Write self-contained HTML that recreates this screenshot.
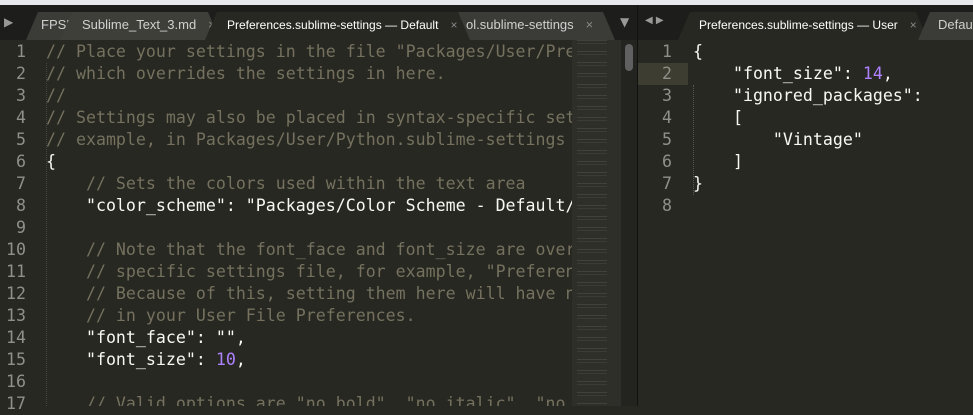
<!DOCTYPE html>
<html><head><meta charset="utf-8"><style>
*{margin:0;padding:0;box-sizing:border-box}
body{width:973px;height:406px;overflow:hidden;background:#272822;position:relative;font-family:"DejaVu Sans Mono","Liberation Mono",monospace}
.top{position:absolute;left:0;top:0;width:973px;height:5px;background:#e6e8ee}
.bar{position:absolute;left:0;top:5px;width:973px;height:35px;background:#1d1d1b}
.tab{position:absolute;top:12px;height:28px;background:#3b3b37;clip-path:polygon(0 100%,12px 0,calc(100% - 12px) 0,100% 100%);font-family:"Liberation Sans",sans-serif;font-size:13px;color:#d0d0d0;line-height:26px;white-space:nowrap;overflow:hidden}
.tab.act{background:#272822;color:#fff}
.x{color:#888;margin-left:12px}
.line{position:absolute;height:22px;line-height:22px;font-size:16.6px;white-space:pre}
.n{color:#8f908a;text-align:right}
.c{color:#75715e}.s{color:#f8f8f2}.p{color:#ae81ff}
.arrow{position:absolute;color:#999;font-size:12px;font-family:"DejaVu Sans",sans-serif}
</style></head><body>
<div class="top"></div>
<div class="bar"></div>
<div class="arrow" style="left:4px;top:15px">▶</div>
<div class="tab" style="left:26px;width:70px;padding-left:15px">FPSD</div>
<div class="tab" style="left:60px;width:160px;padding-left:22px;background:#3f3f3a">Sublime_Text_3.md<span class="x">×</span></div>
<div class="tab" style="left:440px;width:175px;padding-left:26px">ol.sublime-settings<span class="x">×</span></div>
<div class="tab act" style="left:205px;width:265px;padding-left:22px;font-size:12px">Preferences.sublime-settings — Default<span class="x">×</span></div>
<div class="arrow" style="left:620px;top:15px">▼</div>
<div style="position:absolute;left:637px;top:5px;width:1px;height:401px;background:#111"></div>
<div class="arrow" style="left:645px;top:15px;font-size:10px">◀ ▶</div>
<div class="tab act" style="left:678px;width:250px;padding-left:21px;font-size:12px">Preferences.sublime-settings — User<span class="x">×</span></div>
<div class="tab" style="left:918px;width:80px;padding-left:20px">Default</div>

<div style="position:absolute;left:46px;top:63px;width:0;height:343px;border-left:1px dotted #444"></div>
<div style="position:absolute;left:572px;top:40px;width:49px;height:366px;background:#2f2f2a;background-image:repeating-linear-gradient(180deg,rgba(180,180,170,.14) 0 1px,transparent 1px 3px,rgba(180,180,170,.1) 3px 4px,transparent 4px 11px);background-size:30px 11px;background-repeat:repeat-y;background-position:5px 0"></div>
<div style="position:absolute;left:621px;top:40px;width:16px;height:366px;background:#232320"></div>
<div style="position:absolute;left:625px;top:44px;width:8px;height:27px;border-radius:4px;background:#606060"></div>

<div style="position:absolute;left:638px;top:63px;width:50px;height:22px;background:#3e3d32"></div>
<div style="position:absolute;left:693px;top:85px;width:0;height:110px;border-left:1px dotted #555"></div>

<div class="line n" style="left:0;top:41px;width:26px">1</div>
<div class="line n" style="left:0;top:63px;width:26px">2</div>
<div class="line n" style="left:0;top:85px;width:26px">3</div>
<div class="line n" style="left:0;top:107px;width:26px">4</div>
<div class="line n" style="left:0;top:129px;width:26px">5</div>
<div class="line n" style="left:0;top:151px;width:26px">6</div>
<div class="line n" style="left:0;top:173px;width:26px">7</div>
<div class="line n" style="left:0;top:195px;width:26px">8</div>
<div class="line n" style="left:0;top:217px;width:26px">9</div>
<div class="line n" style="left:0;top:239px;width:26px">10</div>
<div class="line n" style="left:0;top:261px;width:26px">11</div>
<div class="line n" style="left:0;top:283px;width:26px">12</div>
<div class="line n" style="left:0;top:305px;width:26px">13</div>
<div class="line n" style="left:0;top:327px;width:26px">14</div>
<div class="line n" style="left:0;top:349px;width:26px">15</div>
<div class="line n" style="left:0;top:371px;width:26px">16</div>
<div class="line n" style="left:0;top:393px;width:26px">17</div>

<div style="position:absolute;left:46px;top:0;width:526px;height:406px;overflow:hidden">
<div class="line c" style="left:0;top:41px">// Place your settings in the file "Packages/User/Preferences.sublime-settings",</div>
<div class="line c" style="left:0;top:63px">// which overrides the settings in here.</div>
<div class="line c" style="left:0;top:85px">//</div>
<div class="line c" style="left:0;top:107px">// Settings may also be placed in syntax-specific setting files, for</div>
<div class="line c" style="left:0;top:129px">// example, in Packages/User/Python.sublime-settings for python files.</div>
<div class="line s" style="left:0;top:151px">{</div>
<div class="line c" style="left:0;top:173px">    // Sets the colors used within the text area</div>
<div class="line s" style="left:0;top:195px">    "color_scheme": "Packages/Color Scheme - Default/Monokai.tmTheme",</div>
<div class="line c" style="left:0;top:239px">    // Note that the font_face and font_size are overridden in the platform</div>
<div class="line c" style="left:0;top:261px">    // specific settings file, for example, "Preferences (Linux).sublime-settings".</div>
<div class="line c" style="left:0;top:283px">    // Because of this, setting them here will have no effect: you must set them</div>
<div class="line c" style="left:0;top:305px">    // in your User File Preferences.</div>
<div class="line s" style="left:0;top:327px">    "font_face": "",</div>
<div class="line s" style="left:0;top:349px">    "font_size": <span class="p">10</span>,</div>
<div class="line c" style="left:0;top:393px">    // Valid options are "no_bold", "no_italic", "no_antialias"</div>
</div>

<div class="line n" style="left:638px;top:41px;width:34px">1</div>
<div class="line n" style="left:638px;top:63px;width:34px">2</div>
<div class="line n" style="left:638px;top:85px;width:34px">3</div>
<div class="line n" style="left:638px;top:107px;width:34px">4</div>
<div class="line n" style="left:638px;top:129px;width:34px">5</div>
<div class="line n" style="left:638px;top:151px;width:34px">6</div>
<div class="line n" style="left:638px;top:173px;width:34px">7</div>
<div class="line n" style="left:638px;top:195px;width:34px">8</div>
<div class="line s" style="left:693px;top:41px">{</div>
<div class="line s" style="left:693px;top:63px">    "font_size": <span class="p">14</span>,</div>
<div class="line s" style="left:693px;top:85px">    "ignored_packages":</div>
<div class="line s" style="left:693px;top:107px">    [</div>
<div class="line s" style="left:693px;top:129px">        "Vintage"</div>
<div class="line s" style="left:693px;top:151px">    ]</div>
<div class="line s" style="left:693px;top:173px">}</div>
</body></html>
